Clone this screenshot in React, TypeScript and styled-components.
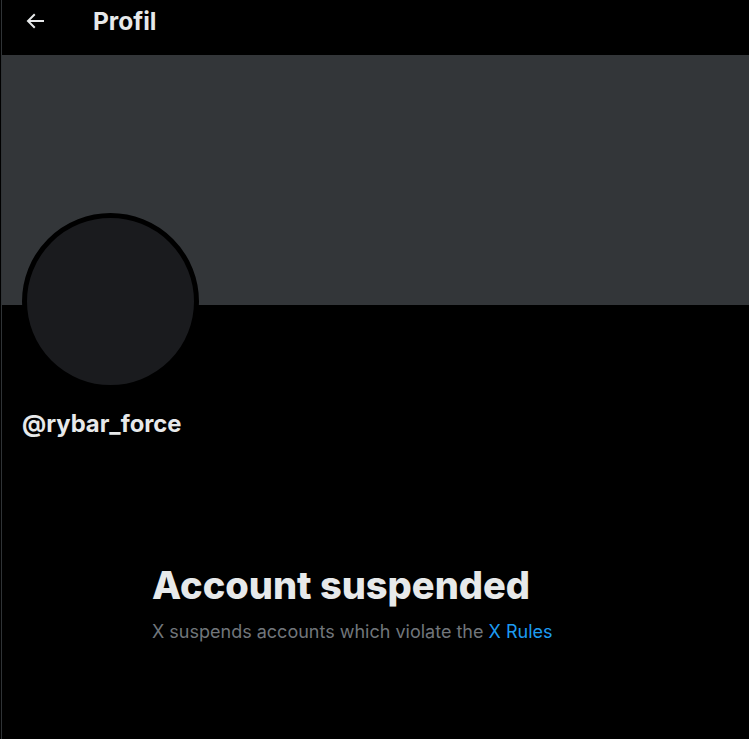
import React from "react";
import styled, { createGlobalStyle } from "styled-components";

const Global = createGlobalStyle`
  html, body { margin: 0; padding: 0; background: #000; }
  body { font-family: Inter, "Open Sans", "Liberation Sans", sans-serif; color: #e7e9ea; }
`;

const Page = styled.div`
  margin-left: 1px;
  border-left: 1px solid #2f3336;
  min-height: 739px;
  background: #000;
`;

const Header = styled.header`
  height: 55px;
  display: flex;
  align-items: flex-start;
  padding: 9px 0 0 21px;
  gap: 46px;
  box-sizing: border-box;
`;

const BackButton = styled.button`
  width: 24px;
  height: 24px;
  padding: 0;
  border: none;
  background: none;
  color: #e7e9ea;
  display: flex;
  align-items: center;
  justify-content: center;
`;

const Title = styled.h2`
  margin: 0;
  font-size: 24.5px;
  font-weight: 700;
  line-height: 25px;
`;

const Banner = styled.div`
  height: 250px;
  background: #333639;
`;

const ProfileInfo = styled.section`
  padding: 0 0 0 20px;
`;

const Avatar = styled.div`
  width: 167px;
  height: 167px;
  border-radius: 50%;
  background: #1a1b1e;
  border: 5px solid #000;
  margin-top: -92px;
`;

const Handle = styled.div`
  margin-top: 20px;
  font-size: 23.8px;
  font-weight: 700;
  line-height: 28px;
`;

const Suspended = styled.div`
  padding: 124px 0 0 150px;
`;

const Heading = styled.h1`
  margin: 0;
  font-size: 38px;
  font-weight: 800;
  line-height: 46px;
`;

const Note = styled.p`
  margin: 12px 0 0;
  font-size: 18px;
  line-height: 24px;
  color: #71767b;
`;

const Link = styled.a`
  color: #1d9bf0;
  text-decoration: none;
`;

export default function App() {
  return (
    <>
      <Global />
      <Page>
        <Header>
          <BackButton aria-label="Back">
            <svg width="24" height="24" viewBox="0 0 24 24" fill="currentColor">
              <path d="M7.414 13l5.043 5.04-1.414 1.42L3.586 12l7.457-7.46 1.414 1.42L7.414 11H21v2H7.414z" />
            </svg>
          </BackButton>
          <Title>Profil</Title>
        </Header>
        <Banner />
        <ProfileInfo>
          <Avatar />
          <Handle>@rybar_force</Handle>
        </ProfileInfo>
        <Suspended>
          <Heading>Account suspended</Heading>
          <Note>
            X suspends accounts which violate the <Link href="#">X Rules</Link>
          </Note>
        </Suspended>
      </Page>
    </>
  );
}
